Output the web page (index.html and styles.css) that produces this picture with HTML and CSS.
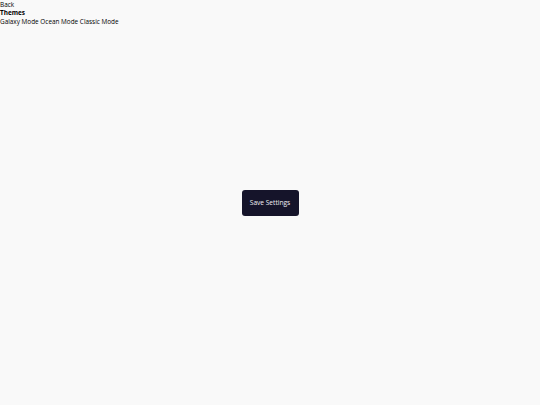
FILE: index.html
```html
<!DOCTYPE html>
<html lang="en">
<head>
<meta charset="utf-8">
<title>Settings</title>
<link rel="stylesheet" href="styles.css">
</head>
<body>
<div class="settings">
  <div class="back">Back</div>
  <div class="title">Themes</div>
  <div class="themes">
    <span class="theme">Galaxy Mode</span>
    <span class="theme">Ocean Mode</span>
    <span class="theme">Classic Mode</span>
  </div>
</div>
<div class="overlay">
  <button class="save">Save Settings</button>
</div>
</body>
</html>
```

FILE: styles.css
```css
html, body {
  margin: 0;
  padding: 0;
  background: #f9f9f9;
}
body {
  font-family: "Open Sans", "Noto Sans", sans-serif;
  font-size: 6.4px;
  line-height: 8.6px;
  color: #000000;
}
.settings {
  display: flex;
  flex-direction: column;
  padding-top: 0.5px;
}
.title {
  font-weight: 700;
}
.themes {
  display: block;
}
.overlay {
  position: fixed;
  inset: 0;
  display: flex;
  align-items: center;
  justify-content: center;
  pointer-events: none;
}
.save {
  pointer-events: auto;
  font-family: "Open Sans", "Noto Sans", sans-serif;
  font-size: 6.6px;
  line-height: 8px;
  color: #f2f2f6;
  background: #15142a;
  border: none;
  border-radius: 3px;
  width: 57px;
  height: 26px;
  padding: 0;
}
```
